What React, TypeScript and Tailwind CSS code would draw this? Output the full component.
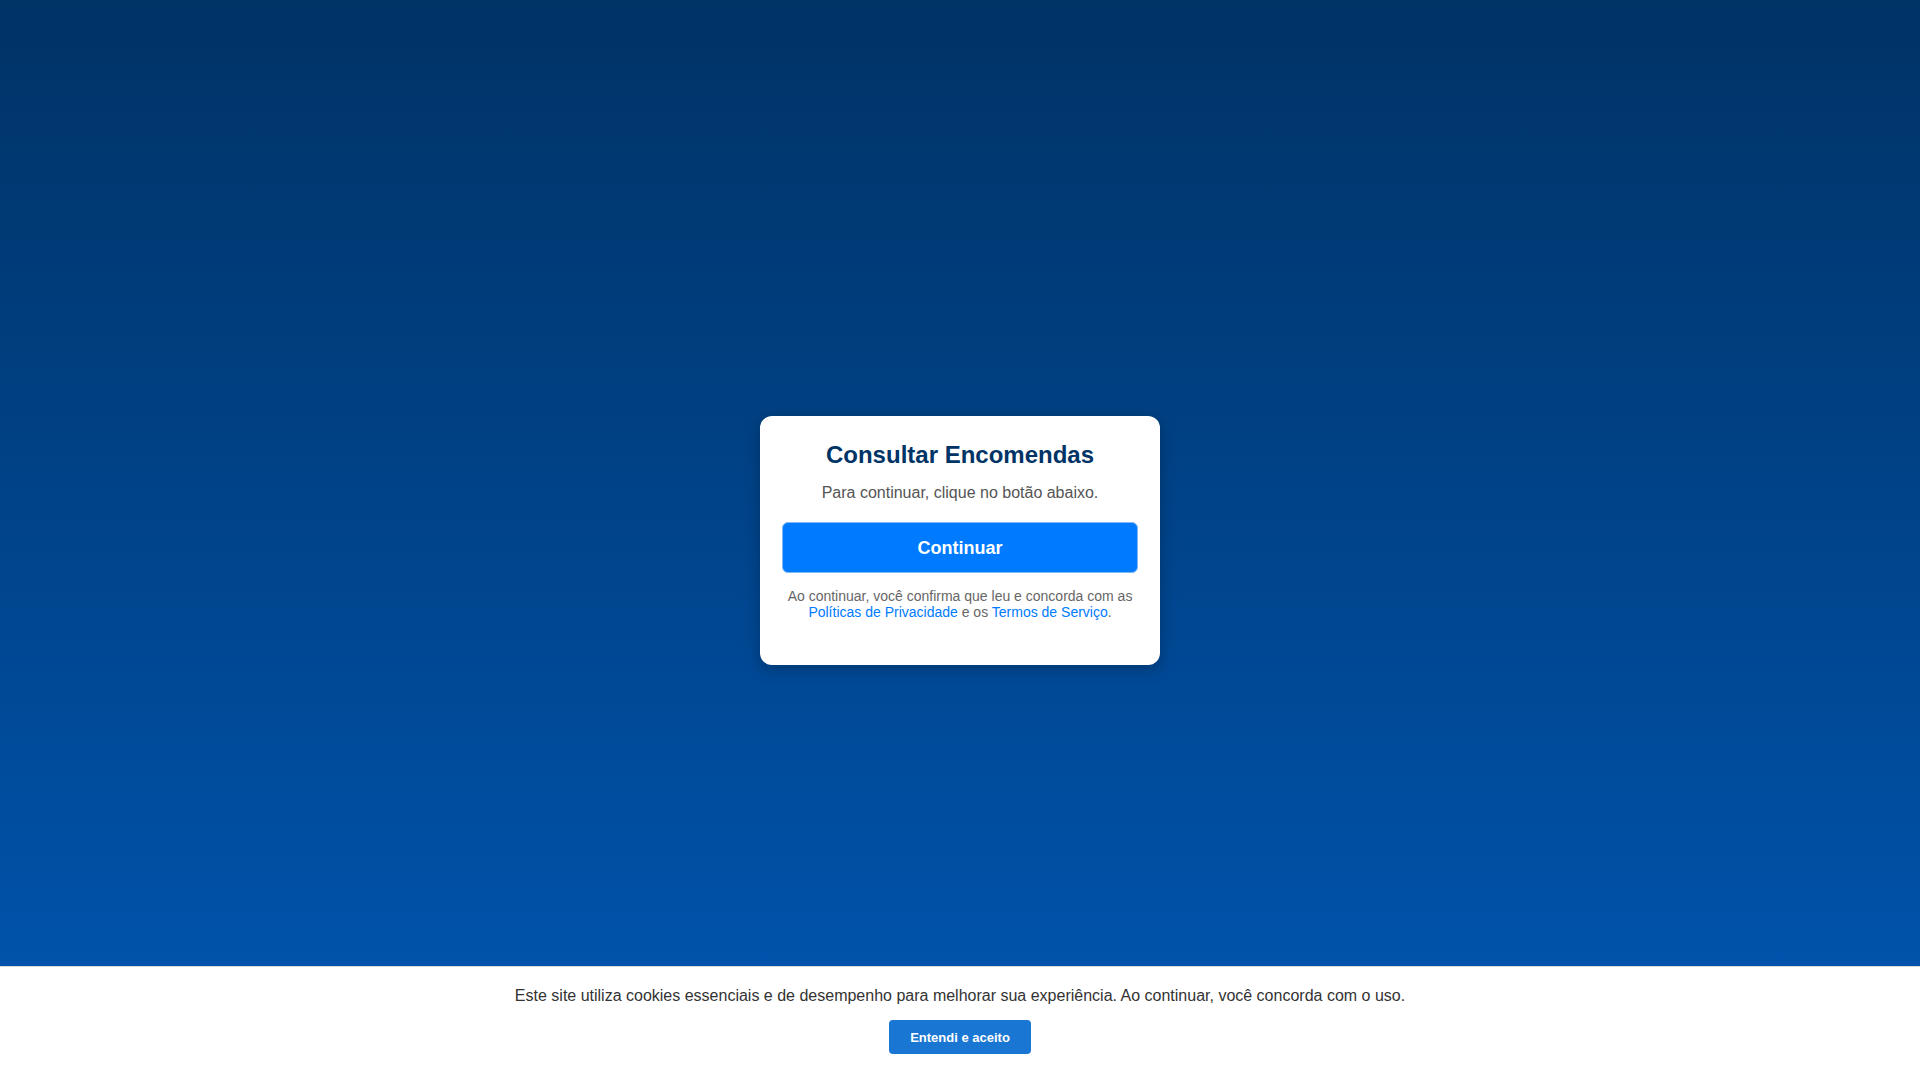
export default function App() {
  return (
    <main
      className="h-screen w-full flex items-center justify-center bg-gradient-to-b from-[#003366] to-[#0056b3] relative"
      style={{ fontFamily: '"Liberation Sans", Arial, sans-serif' }}
    >
      {/* Tarjeta central */}
      <div className="w-[400px] bg-white rounded-[12px] pt-[25px] px-[22px] pb-[45px] text-center shadow-[0_4px_16px_rgba(0,0,0,0.25)]">
        <h1 className="text-[24px] leading-[27px] font-bold text-[#003366]">
          Consultar Encomendas
        </h1>
        <p className="mt-[16px] text-[16px] leading-[18px] text-[#555555]">
          Para continuar, clique no botão abaixo.
        </p>
        <button className="mt-5 w-full h-[51px] rounded-[6px] bg-[#007bff] border border-[#7fb8f5] text-white text-[18px] font-bold pt-[2px]">
          Continuar
        </button>
        <p className="mt-[15px] text-[14px] leading-[16px] text-[#666666]">
          Ao continuar, você confirma que leu e concorda com as
          <br />
          <a className="text-[#007bff]">Políticas de Privacidade</a> e os{" "}
          <a className="text-[#007bff]">Termos de Serviço</a>.
        </p>
      </div>

      {/* Aviso de cookies */}
      <div className="fixed bottom-0 left-0 right-0 h-[114px] bg-white border-t border-[#d6d9de] flex flex-col items-center pt-[20px]">
        <p className="text-[16px] leading-[18px] text-[#333333]">
          Este site utiliza cookies essenciais e de desempenho para melhorar sua experiência. Ao continuar, você concorda com o uso.
        </p>
        <button className="mt-[15px] h-[34px] px-[21px] rounded-[4px] bg-[#1976d2] text-white text-[13px] font-bold pt-[1px]">
          Entendi e aceito
        </button>
      </div>
    </main>
  );
}
